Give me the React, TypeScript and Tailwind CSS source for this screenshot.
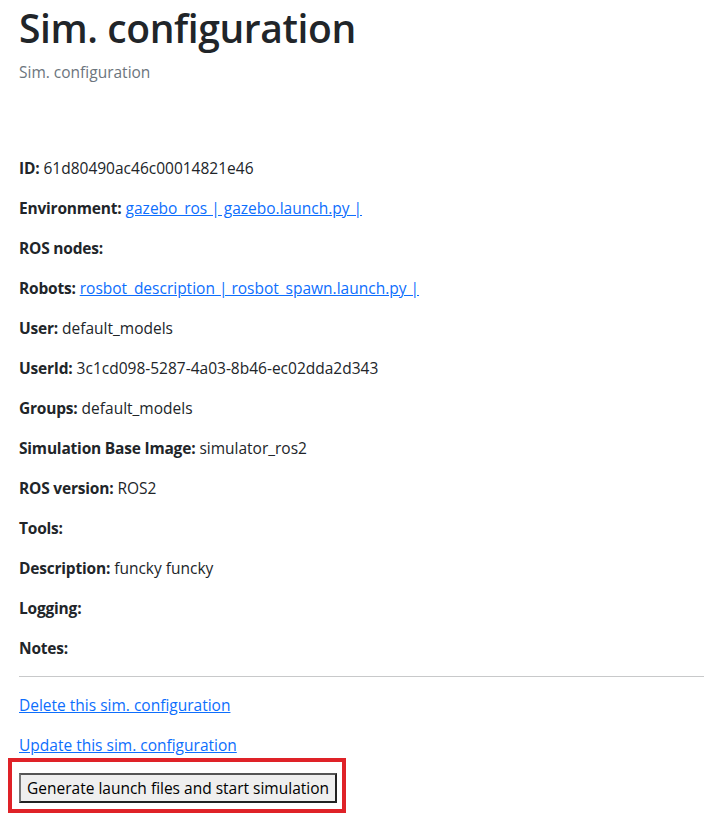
export default function App() {
  const font = { fontFamily: '"Open Sans", "Noto Sans", sans-serif' };
  const rows: { label: string; value?: string; link?: string }[] = [
    { label: "ID:", value: "61d80490ac46c00014821e46" },
    { label: "Environment:", link: "gazebo_ros | gazebo.launch.py |" },
    { label: "ROS nodes:" },
    { label: "Robots:", link: "rosbot_description | rosbot_spawn.launch.py |" },
    { label: "User:", value: "default_models" },
    { label: "UserId:", value: "3c1cd098-5287-4a03-8b46-ec02dda2d343" },
    { label: "Groups:", value: "default_models" },
    { label: "Simulation Base Image:", value: "simulator_ros2" },
    { label: "ROS version:", value: "ROS2" },
    { label: "Tools:" },
    { label: "Description:", value: "funcky funcky" },
    { label: "Logging:" },
    { label: "Notes:" },
  ];
  return (
    <div className="min-h-[815px] w-[704px] bg-white text-[#212529] text-[15.5px] leading-[24px] overflow-hidden" style={font}>
      <div className="pl-[19px] pt-[4px]">
        <h1 className="text-[39px] leading-[48px] font-semibold mb-[8px] tracking-[-0.4px]">Sim. configuration</h1>
        <p className="text-[#6c757d] mb-[72px]">Sim. configuration</p>
        {rows.map((r) => (
          <p key={r.label} className="mb-[16px] whitespace-nowrap">
            <span className="font-bold tracking-[-0.2px]">{r.label}</span>
            {r.value ? " " + r.value : ""}
            {r.link ? (
              <>
                {" "}
                <a href="#" className="text-[#0d6efd] underline">{r.link}</a>
              </>
            ) : null}
          </p>
        ))}
        <hr className="border-0 border-t border-[#c8c9ca] mt-0 mb-[16px]" />
        <p className="mb-[16px]">
          <a href="#" className="text-[#0d6efd] underline">Delete this sim. configuration</a>
        </p>
        <p className="mb-[1px]">
          <a href="#" className="text-[#0d6efd] underline">Update this sim. configuration</a>
        </p>
        <div className="ml-[-11px] inline-block border-4 border-[#df2228] pl-[7px] pt-[11px] pb-[6px] pr-[5px]">
          <button
            className="block h-[30px] w-[318px] bg-[#efefef] border-2 border-t-[#555] border-l-[#777] border-r-[#222] border-b-[#222] text-black text-[15.5px] leading-[20px] px-[6px] whitespace-nowrap"
            style={font}
          >
            Generate launch files and start simulation
          </button>
        </div>
      </div>
    </div>
  );
}
